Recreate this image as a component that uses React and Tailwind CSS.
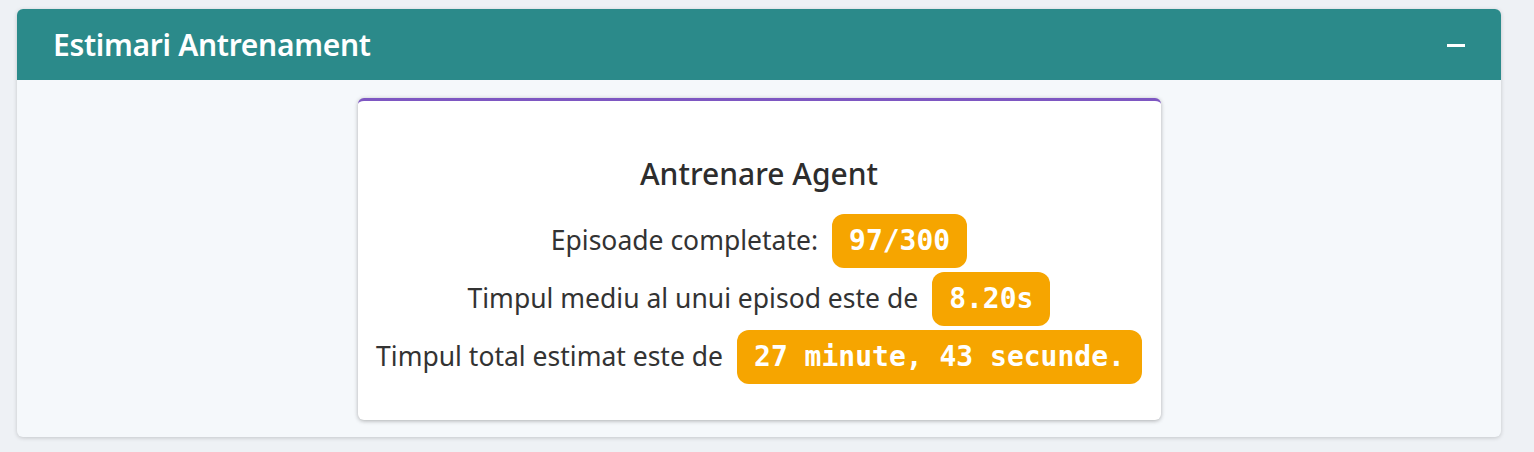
export default function App() {
  const rows = [
    { label: 'Episoade completate:', value: '97/300' },
    { label: 'Timpul mediu al unui episod este de', value: '8.20s' },
    { label: 'Timpul total estimat este de', value: '27 minute, 43 secunde.' },
  ]

  return (
    <div className="min-h-screen bg-[#eef1f5] pl-[17px] pr-[33px] pt-[9px]" style={{ fontFamily: '"Noto Sans", "Open Sans", sans-serif' }}>
      {/* Panel */}
      <div className="rounded-md overflow-hidden bg-[#f5f8fb] shadow-[0_1px_4px_rgba(0,0,0,0.18)]">
        <div className="h-[71px] bg-[#2b8a8a] flex items-center justify-between pl-[36px] pr-[36px]">
          <h2 className="text-white text-[30px] font-semibold tracking-[-0.3px]">Estimari Antrenament</h2>
          <span className="block w-[18px] h-[3px] bg-white mt-[2px]" />
        </div>

        <div className="flex justify-center pt-[18px] pb-[17px]">
          {/* Card */}
          <div className="w-[803px] bg-white rounded-md border-t-[3px] border-[#7e57c2] shadow-[0_1px_4px_rgba(0,0,0,0.3)] pt-[53px] pb-[36px] flex flex-col items-center">
            <h3 className="text-[#2d2d2d] text-[30px] font-medium mb-[20px] leading-[40px]">Antrenare Agent</h3>
            <div className="flex flex-col items-center gap-[4px]">
              {rows.map((r) => (
                <div key={r.label} className="flex items-center gap-[14px]">
                  <span className="text-[#333] text-[26.5px]">{r.label}</span>
                  <span
                    className="h-[54px] flex items-center px-[17px] rounded-[12px] bg-[#f6a500] text-white text-[28px] font-bold"
                    style={{ fontFamily: '"DejaVu Sans Mono", "Liberation Mono", monospace' }}
                  >
                    {r.value}
                  </span>
                </div>
              ))}
            </div>
          </div>
        </div>
      </div>
    </div>
  )
}
